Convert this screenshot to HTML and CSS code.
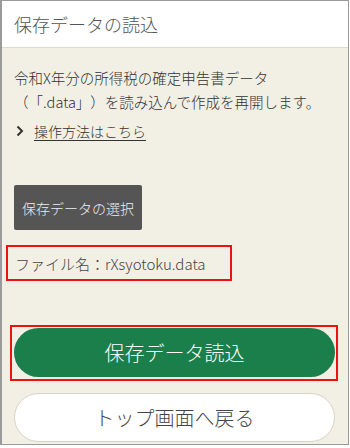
FILE: index.html
```html
<!DOCTYPE html>
<html lang="ja">
<head>
<meta charset="utf-8">
<link rel="stylesheet" href="styles.css">
</head>
<body>
<div class="frame">
  <div class="header">保存データの読込</div>
  <div class="content">
    <p class="desc">令和X年分の所得税の確定申告書データ<br>（「.data」）を読み込んで作成を再開します。</p>
    <div class="link-row">
      <svg class="chev" width="8" height="12" viewBox="0 0 8 12"><path d="M1.5 1.5 L6 6 L1.5 10.5" fill="none" stroke="#333" stroke-width="2"/></svg>
      <a class="link" href="#">操作方法はこちら</a>
    </div>
    <div class="select-btn">保存データの選択</div>
    <div class="file-box">ファイル名：rXsyotoku.data</div>
    <div class="primary-wrap">
      <div class="primary-btn">保存データ読込</div>
    </div>
    <div class="secondary-btn">トップ画面へ戻る</div>
  </div>
</div>
</body>
</html>
```

FILE: styles.css
```css
html, body {
  margin: 0;
  padding: 0;
  background: #ffffff;
}
body {
  font-family: "Noto Sans CJK JP", "Noto Sans", sans-serif;
  font-weight: 300;
  text-spacing-trim: space-all;
}
.frame {
  width: 346px;
  border: 1px solid #9a9a9a;
  border-left-width: 2px;
  background: #f2efe4;
}
.header {
  height: 46px;
  background: #ffffff;
  border-bottom: 1px solid #dddad2;
  padding-left: 12px;
  display: flex;
  align-items: center;
  font-size: 18px;
  color: #555555;
}
.content {
  padding: 18px 12px 2px 12px;
  display: flex;
  flex-direction: column;
}
.desc {
  margin: 0;
  font-size: 14.5px;
  line-height: 24px;
  color: #333333;
  white-space: nowrap;
}
.link-row {
  margin-top: 5px;
  height: 24px;
  display: flex;
  align-items: center;
  font-size: 14px;
}
.chev {
  margin-left: 2px;
  margin-right: 10px;
}
.link {
  color: #333333;
  text-decoration: underline;
  text-underline-offset: 3px;
}
.select-btn {
  margin-top: 42px;
  align-self: flex-start;
  width: 128px;
  height: 45px;
  box-sizing: border-box;
  background: #555555;
  color: #eeeeee;
  border-radius: 2px;
  font-size: 14px;
  display: flex;
  align-items: center;
  justify-content: center;
}
.file-box {
  margin-top: 15px;
  margin-left: -8px;
  width: 226px;
  height: 36px;
  box-sizing: border-box;
  border: 2px solid #ee1111;
  padding-left: 7px;
  display: flex;
  align-items: center;
  font-size: 15px;
  color: #444444;
}
.primary-wrap {
  margin-top: 44px;
  margin-left: -4px;
  width: 328px;
  box-sizing: border-box;
  border: 2px solid #ee1111;
  padding: 1px 1px 2px 2px;
}
.primary-btn {
  height: 49px;
  border-radius: 25px;
  background: #1b7f4c;
  color: #ffffff;
  font-size: 20px;
  display: flex;
  align-items: center;
  justify-content: center;
}
.secondary-btn {
  margin-top: 12px;
  width: 321px;
  height: 49px;
  box-sizing: border-box;
  border: 1px solid #d8d2c4;
  border-radius: 25px;
  background: #ffffff;
  color: #444444;
  font-size: 20px;
  display: flex;
  align-items: center;
  justify-content: center;
}
```
